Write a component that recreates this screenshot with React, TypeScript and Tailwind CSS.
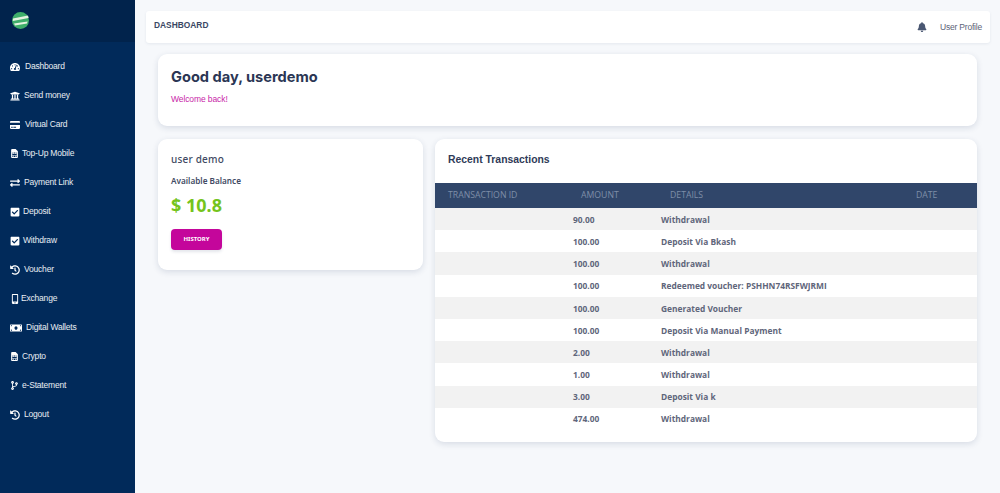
import type { ReactNode } from "react";
import { FaBell, FaCheckSquare, FaCodeBranch, FaCreditCard, FaExchangeAlt, FaHistory, FaMobileAlt, FaMoneyBill, FaSimCard, FaTachometerAlt, FaUniversity } from "react-icons/fa";

const nav: { label: string; icon: ReactNode; slot: string }[] = [
  { label: "Dashboard", icon: <FaTachometerAlt />, slot: "w-[15px]" },
  { label: "Send money", icon: <FaUniversity />, slot: "w-[14px]" },
  { label: "Virtual Card", icon: <FaCreditCard />, slot: "w-[15px]" },
  { label: "Top-Up Mobile", icon: <FaSimCard className="text-[9px]" />, slot: "w-[12px]" },
  { label: "Payment Link", icon: <FaExchangeAlt />, slot: "w-[14px]" },
  { label: "Deposit", icon: <FaCheckSquare />, slot: "w-[13px]" },
  { label: "Withdraw", icon: <FaCheckSquare />, slot: "w-[13px]" },
  { label: "Voucher", icon: <FaHistory />, slot: "w-[14px]" },
  { label: "Exchange", icon: <FaMobileAlt />, slot: "w-[11px]" },
  { label: "Digital Wallets", icon: <FaMoneyBill className="text-[12px]" />, slot: "w-[16px]" },
  { label: "Crypto", icon: <FaSimCard className="text-[9px]" />, slot: "w-[12px]" },
  { label: "e-Statement", icon: <FaCodeBranch className="text-[9px]" />, slot: "w-[12px]" },
  { label: "Logout", icon: <FaHistory />, slot: "w-[14px]" },
];

const rows = [
  ["90.00", "Withdrawal"],
  ["100.00", "Deposit Via Bkash"],
  ["100.00", "Withdrawal"],
  ["100.00", "Redeemed voucher: PSHHN74RSFWJRMI"],
  ["100.00", "Generated Voucher"],
  ["100.00", "Deposit Via Manual Payment"],
  ["2.00", "Withdrawal"],
  ["1.00", "Withdrawal"],
  ["3.00", "Deposit Via k"],
  ["474.00", "Withdrawal"],
];

function Logo() {
  return (
    <svg width="17" height="17" viewBox="0 0 17 17">
      <circle cx="8.5" cy="8.5" r="8.5" fill="#3fae6a" />
      <path d="M1 6.5 L16 3.5 L16.6 6 L0.8 9 Z" fill="#e6f3e0" />
      <path d="M2 11.5 L15.6 9.5 L15 11.6 L3 13.6 Z" fill="#e6f3e0" />
    </svg>
  );
}

export default function App() {
  return (
    <div className="flex h-[493px] w-[1000px] overflow-hidden bg-[#f6f8fb] font-['Liberation_Sans',sans-serif]">
      <aside className="h-full w-[135px] shrink-0 bg-[#012a5a] text-[#e8edf3]">
        <div className="flex h-[42px] items-center bg-[#01234c] pb-[1px] pl-[12px]">
          <Logo />
        </div>
        <nav className="pt-[10px]">
          {nav.map((item) => (
            <div key={item.label} className="flex h-[29px] items-center pl-[10px] text-[8.5px] tracking-[-0.2px]">
              <span className={`flex shrink-0 items-center text-[10px] text-white ${item.slot}`}>{item.icon}</span>
              <span>{item.label}</span>
            </div>
          ))}
        </nav>
      </aside>

      <main className="min-w-0 flex-1 pl-[11px] pr-[10px] pt-[11px]">
        <header className="flex h-[32px] items-center justify-between rounded-[3px] bg-white pl-[8px] pr-[8px] shadow-[0_1px_3px_rgba(30,50,90,0.08)]">
          <span className="pb-[4px] text-[8.4px] font-bold text-[#3a4764]">DASHBOARD</span>
          <div className="flex items-center">
            <FaBell className="text-[10px] text-[#4a5772]" />
            <span className="ml-[13px] text-[8.5px] tracking-[-0.2px] text-[#5c6478]">User Profile</span>
          </div>
        </header>

        <div className="pl-[12px] pr-[13px]">
          <section className="mt-[11px] h-[72px] rounded-[9px] bg-white pl-[13px] pt-[12px] shadow-[0_2px_6px_rgba(30,50,90,0.14)]">
            <h1 className="font-['Inter',sans-serif] text-[14.6px] font-bold leading-[22px] text-[#2b3654]">Good day, userdemo</h1>
            <p className="mt-[5px] text-[8.5px] leading-[12px] tracking-[-0.1px] text-[#c81fa8]">Welcome back!</p>
          </section>

          <div className="mt-[13px] flex items-start gap-[12px]">
            <section className="h-[131px] w-[265px] shrink-0 rounded-[9px] bg-white pl-[13px] pt-[12px] font-['Noto_Sans',sans-serif] shadow-[0_2px_6px_rgba(30,50,90,0.14)]">
              <h2 className="text-[10px] font-medium leading-[16px] tracking-[0.2px] text-[#414a63]">user demo</h2>
              <p className="mt-[7px] text-[8.2px] font-semibold leading-[13px] text-[#414a63]">Available Balance</p>
              <p className="mt-[5px] text-[18px] font-bold leading-[27px] text-[#75c41c]">$ 10.8</p>
              <button className="mt-[10px] h-[21px] w-[51px] rounded-[4px] bg-[#c4069b] text-[6px] font-bold text-white shadow-[0_2px_3px_rgba(30,50,90,0.12)]">HISTORY</button>
            </section>

            <section className="h-[303px] min-w-0 flex-1 rounded-[9px] bg-white shadow-[0_2px_6px_rgba(30,50,90,0.14)]">
              <h2 className="h-[44px] pl-[13px] pt-[14px] text-[10.4px] font-bold leading-[14px] text-[#2f3b58]">Recent Transactions</h2>
              <table className="w-full table-fixed border-collapse font-['Open_Sans',sans-serif]">
                <colgroup>
                  <col className="w-[133px]" />
                  <col className="w-[89px]" />
                  <col className="w-[246px]" />
                  <col />
                </colgroup>
                <thead>
                  <tr className="h-[25px] bg-[#30466a] text-left text-[8.7px] text-[#7e8ea8]">
                    <th className="pl-[13px] pt-[1px] font-medium">TRANSACTION ID</th>
                    <th className="pl-[13px] pt-[1px] font-medium">AMOUNT</th>
                    <th className="pl-[13px] pt-[1px] font-medium">DETAILS</th>
                    <th className="pl-[13px] pt-[1px] font-medium">DATE</th>
                  </tr>
                </thead>
                <tbody>
                  {rows.map((row, i) => (
                    <tr key={i} className={`h-[22.2px] text-[8.4px] font-bold text-[#5f667b] ${i % 2 === 0 ? "bg-[#f2f2f2]" : "bg-white"}`}>
                      <td />
                      <td className="pl-[5px] pt-[2px]">{row[0]}</td>
                      <td className="pl-[4px] pt-[2px]">{row[1]}</td>
                      <td />
                    </tr>
                  ))}
                </tbody>
              </table>
            </section>
          </div>
        </div>
      </main>
    </div>
  );
}
